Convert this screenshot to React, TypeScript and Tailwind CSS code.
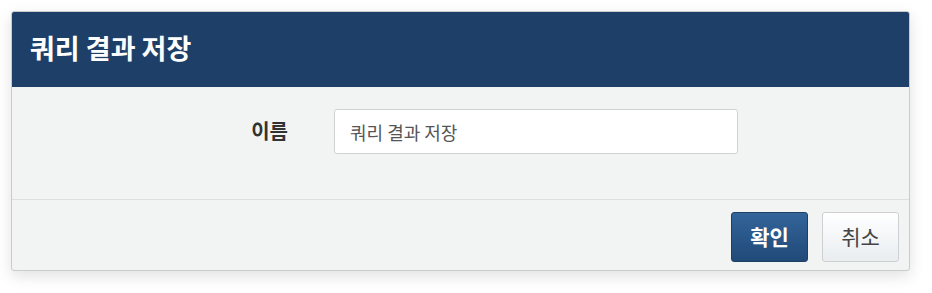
export default function App() {
  return (
    <div className="w-[932px] h-[293px] bg-white pt-[11px] pl-[11px] font-['Noto_Sans_CJK_KR',sans-serif]">
      <div className="w-[899px] rounded-[3px] border border-[#c9cbcd] bg-[#f2f3f3] shadow-[0_5px_15px_rgba(0,0,0,0.12)] overflow-hidden">
        <div className="h-[75px] bg-[#1e4068] flex items-center px-[18px] pb-[4px]">
          <h1 className="text-white text-[27px] font-bold leading-none">쿼리 결과 저장</h1>
        </div>
        <div className="h-[113px] border-b border-[#dcdedf] pt-[22px] flex">
          <label className="w-[276px] text-right text-[20px] font-bold text-[#333] leading-[44px]">이름</label>
          <input
            defaultValue="쿼리 결과 저장"
            className="ml-[46px] w-[404px] h-[45px] bg-white border border-[#cfd2d4] rounded-[3px] px-[15px] text-[18px] text-[#555] outline-none"
          />
        </div>
        <div className="h-[70px] flex items-start justify-end gap-[14px] pt-[12px] pr-[10px]">
          <button className="w-[77px] h-[50px] rounded-[3px] border border-[#1c3f66] bg-gradient-to-b from-[#33649a] to-[#204a78] text-white text-[21px] font-bold">확인</button>
          <button className="w-[77px] h-[50px] rounded-[3px] border border-[#cdd0d3] bg-gradient-to-b from-[#ffffff] to-[#e9edf0] text-[#444] text-[21px]">취소</button>
        </div>
      </div>
    </div>
  );
}
